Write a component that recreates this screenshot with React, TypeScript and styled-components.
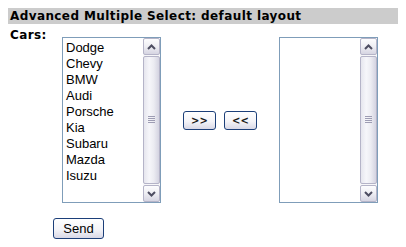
import React from "react";
import styled, { createGlobalStyle } from "styled-components";

const GlobalStyle = createGlobalStyle`
  html, body { background: #ffffff; }
  body {
    margin: 8px;
    font-family: "DejaVu Sans", Verdana, sans-serif;
    color: #000;
  }
`;

const Header = styled.div`
  background: #cccccc;
  height: 16px;
  line-height: 16px;
  padding-left: 2px;
  font-size: 12px;
  font-weight: bold;
  letter-spacing: 0.4px;
`;

const FormRow = styled.div`
  display: flex;
  align-items: flex-start;
`;

const Label = styled.div`
  width: 52px;
  padding-left: 2px;
  padding-top: 4px;
  font-size: 12px;
  font-weight: bold;
  line-height: 14px;
  letter-spacing: 0.4px;
`;

const Lists = styled.div`
  display: flex;
  align-items: center;
  margin-top: 13px;
`;

const ListBox = styled.div`
  box-sizing: border-box;
  width: 99px;
  height: 166px;
  border: 1px solid #7f9db9;
  background: #fff;
  display: flex;
`;

const Options = styled.div`
  flex: 1;
  padding: 2px 0 0 3px;
  font-family: "Liberation Sans", Arial, sans-serif;
  font-size: 13px;
  line-height: 16px;
`;

const Option = styled.div`
  white-space: nowrap;
`;

const ScrollBar = styled.div`
  width: 17px;
  display: flex;
  flex-direction: column;
  background: #f7f7f9;
`;

const ArrowBtn = styled.div`
  box-sizing: border-box;
  height: 17px;
  border: 1px solid #b5b4c8;
  border-radius: 2px;
  background: linear-gradient(180deg, #fdfdfe 0%, #eeeef3 50%, #d6d5e2 100%);
  display: flex;
  align-items: center;
  justify-content: center;
`;

const Track = styled.div`
  flex: 1;
  padding: 1px 0;
  display: flex;
`;

const Thumb = styled.div`
  box-sizing: border-box;
  flex: 1;
  border: 1px solid #b5b4c8;
  border-radius: 2px;
  background: linear-gradient(90deg, #e6e6ee 0%, #f6f6fa 35%, #ececf2 65%, #d4d3e1 100%);
  display: flex;
  align-items: center;
  justify-content: center;
`;

const MoveButtons = styled.div`
  display: flex;
  gap: 8px;
  margin: 0 22px 0 22px;
`;

const Button = styled.button<{ $w: number; $h: number }>`
  box-sizing: border-box;
  width: ${(p) => p.$w}px;
  height: ${(p) => p.$h}px;
  padding: 0;
  border: 1px solid #1c3f79;
  border-radius: 3px;
  background: linear-gradient(180deg, #ffffff 0%, #f4f4f8 55%, #d9d8e6 100%);
  font-family: "Liberation Sans", Tahoma, sans-serif;
  font-size: 13px;
  color: #000;
  display: flex;
  align-items: center;
  justify-content: center;
`;

const SmallText = styled.span`
  font-family: "DejaVu Sans", Tahoma, sans-serif;
  font-size: 10px;
  font-weight: bold;
  color: #1a1a1a;
`;

const SendRow = styled.div`
  padding-left: 45px;
  margin-top: 15px;
`;

const Up = () => (
  <svg width="9" height="6" viewBox="0 0 9 6">
    <path d="M1 5 L4.5 1.5 L8 5" fill="none" stroke="#4d4d61" strokeWidth="2" />
  </svg>
);

const Down = () => (
  <svg width="9" height="6" viewBox="0 0 9 6">
    <path d="M1 1 L4.5 4.5 L8 1" fill="none" stroke="#4d4d61" strokeWidth="2" />
  </svg>
);

const Grip = () => (
  <svg width="7" height="8" viewBox="0 0 7 8">
    <g stroke="#9d9cb3" strokeWidth="1">
      <line x1="0" y1="0.5" x2="7" y2="0.5" />
      <line x1="0" y1="2.5" x2="7" y2="2.5" />
      <line x1="0" y1="4.5" x2="7" y2="4.5" />
      <line x1="0" y1="6.5" x2="7" y2="6.5" />
    </g>
  </svg>
);

const Scroll = () => (
  <ScrollBar>
    <ArrowBtn><Up /></ArrowBtn>
    <Track>
      <Thumb><Grip /></Thumb>
    </Track>
    <ArrowBtn><Down /></ArrowBtn>
  </ScrollBar>
);

const cars = ["Dodge", "Chevy", "BMW", "Audi", "Porsche", "Kia", "Subaru", "Mazda", "Isuzu"];

export default function App() {
  return (
    <>
      <GlobalStyle />
      <Header>Advanced Multiple Select: default layout</Header>
      <FormRow>
        <Label>Cars:</Label>
        <Lists>
          <ListBox>
            <Options>
              {cars.map((c) => (
                <Option key={c}>{c}</Option>
              ))}
            </Options>
            <Scroll />
          </ListBox>
          <MoveButtons>
            <Button $w={33} $h={19}><SmallText>&gt;&gt;</SmallText></Button>
            <Button $w={33} $h={19}><SmallText>&lt;&lt;</SmallText></Button>
          </MoveButtons>
          <ListBox>
            <Options />
            <Scroll />
          </ListBox>
        </Lists>
      </FormRow>
      <SendRow>
        <Button $w={51} $h={21}>Send</Button>
      </SendRow>
    </>
  );
}
